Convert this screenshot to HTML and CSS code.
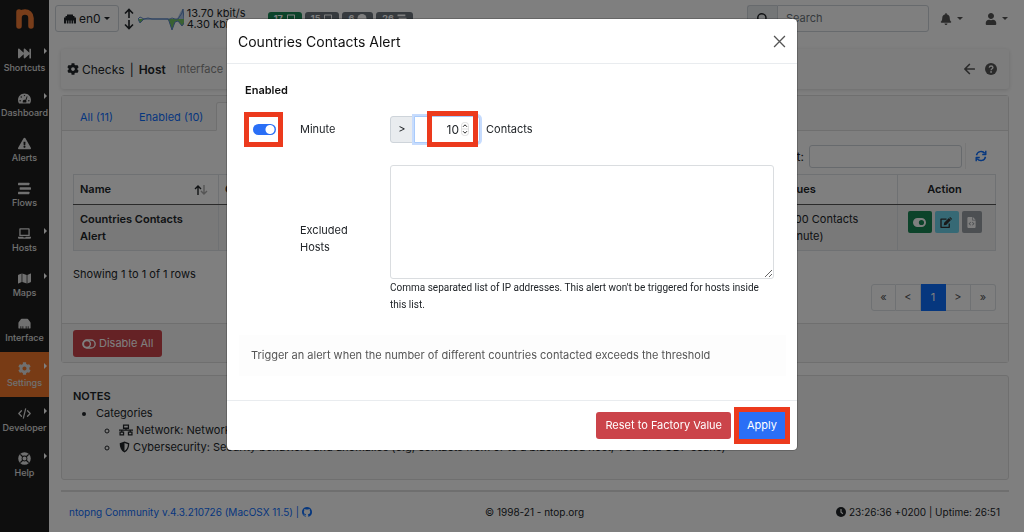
FILE: index.html
```html
<!DOCTYPE html>
<html lang="en">
<head>
<meta charset="utf-8">
<title>ntopng - Checks</title>
<link rel="stylesheet" href="styles.css">
</head>
<body>
<svg class="sprite" aria-hidden="true">
  <symbol id="i-forward" viewBox="0 0 512 512"><path d="M512 76v360c0 6.600-5.400 12-12 12h-40c-6.600 0-12-5.400-12-12V284.100L276.500 440.600c-20.600 17.200-52.500 2.800-52.500-24.600V284.100L52.500 440.600C31.900 457.800 0 443.400 0 416V96c0-27.400 31.900-41.700 52.500-24.600L224 226.800V96c0-27.400 31.900-41.700 52.500-24.600L448 226.800V76c0-6.600 5.400-12 12-12h40c6.600 0 12 5.400 12 12z"/></symbol>
  <symbol id="i-gauge" viewBox="0 0 576 512"><path fill-rule="evenodd" d="M288 32C129 32 0 161 0 320c0 52.800 14.300 102.300 39 144.800 5.600 9.600 16.300 15.200 27.400 15.200h443.200c11.100 0 21.800-5.600 27.400-15.200 24.700-42.500 39-92 39-144.800C576 161 447 32 288 32zm0 64c18 0 32 14 32 32s-14 32-32 32-32-14-32-32 14-32 32-32zM96 384c-18 0-32-14-32-32s14-32 32-32 32 14 32 32-14 32-32 32zm48-160c-18 0-32-14-32-32s14-32 32-32 32 14 32 32-14 32-32 32zm247-69 32 10-62 188c14 16 18 50 2 79H213c-16-60 15-112 75-116 13 0 26 4 37 10zm89 229c-18 0-32-14-32-32s14-32 32-32 32 14 32 32-14 32-32 32z"/></symbol>
  <symbol id="i-alert" viewBox="0 0 576 512"><path d="M569.517 440.013C587.975 472.007 564.806 512 527.940 512H48.054c-36.937 0-59.999-40.055-41.577-71.987L246.423 23.985c18.467-32.009 64.720-31.951 83.154 0l239.940 416.028zM288 354c-25.405 0-46 20.595-46 46s20.595 46 46 46 46-20.595 46-46-20.595-46-46-46zm-43.673-165.346l7.418 136c.347 6.364 5.609 11.346 11.982 11.346h48.546c6.373 0 11.635-4.982 11.982-11.346l7.418-136c.375-6.874-5.098-12.654-11.982-12.654h-63.383c-6.884 0-12.356 5.780-11.981 12.654z"/></symbol>
  <symbol id="i-stream" viewBox="0 0 512 512"><rect x="0" y="32" width="448" height="96" rx="16"/><rect x="64" y="208" width="448" height="96" rx="16"/><rect x="0" y="384" width="448" height="96" rx="16"/></symbol>
  <symbol id="i-laptop" viewBox="0 0 640 512"><path d="M624 416H381.540c-.740 19.810-14.710 32-32.740 32H288c-18.690 0-33.020-17.470-32.770-32H16c-8.800 0-16 7.200-16 16v16c0 35.200 28.800 64 64 64h512c35.200 0 64-28.800 64-64v-16c0-8.800-7.200-16-16-16zM576 48c0-26.400-21.600-48-48-48H112C85.600 0 64 21.600 64 48v336h512V48zm-64 272H128V64h384v256z"/></symbol>
  <symbol id="i-map" viewBox="0 0 576 512"><path d="M0 117.660v346.320c0 11.320 11.430 19.060 21.940 14.860L160 416V32L20.120 87.950A32 32 0 0 0 0 117.660zM192 416l192 64V96L192 32v384zM554.060 33.160L416 96v384l139.880-55.950A32 32 0 0 0 576 394.340V48.020c0-11.320-11.430-19.060-21.940-14.860z"/></symbol>
  <symbol id="i-eth" viewBox="0 0 512 512"><path d="M496 192h-48v-48c0-8.800-7.200-16-16-16h-48V80c0-8.800-7.200-16-16-16H144c-8.800 0-16 7.200-16 16v48H80c-8.800 0-16 7.200-16 16v48H16c-8.800 0-16 7.200-16 16v224c0 8.800 7.200 16 16 16h80V320h32v128h64V320h32v128h64V320h32v128h64V320h32v128h80c8.800 0 16-7.200 16-16V208c0-8.800-7.200-16-16-16z"/></symbol>
  <symbol id="i-port" viewBox="0 0 512 512"><path d="M150 70h212c20 0 40 20 60 50l65 85c8 10 9 20 9 30v195c0 10-8 18-18 18h-62v-80h-32v80h-48v-80h-32v80h-96v-80h-32v80h-48v-80H96v80H34c-10 0-18-8-18-18V235c0-10 1-20 9-30l65-85c20-30 40-50 60-50z"/></symbol>
  <symbol id="i-cog" viewBox="0 0 512 512"><path d="M487.400 315.700l-42.600-24.600c4.300-23.200 4.300-47 0-70.200l42.600-24.600c4.900-2.800 7.100-8.600 5.500-14-11.100-35.600-30-67.800-54.700-94.600-3.800-4.100-10-5.100-14.800-2.300L380.800 110c-17.900-15.400-38.500-27.300-60.800-35.100V25.800c0-5.600-3.900-10.500-9.400-11.700-36.700-8.200-74.300-7.800-109.200 0-5.500 1.200-9.400 6.100-9.400 11.700V75c-22.200 7.900-42.800 19.800-60.800 35.100L88.700 85.500c-4.900-2.800-11-1.900-14.800 2.300-24.700 26.700-43.600 58.900-54.700 94.600-1.700 5.400.6 11.200 5.500 14L67.300 221c-4.300 23.200-4.300 47 0 70.200l-42.600 24.600c-4.900 2.800-7.100 8.600-5.500 14 11.100 35.600 30 67.800 54.700 94.600 3.800 4.100 10 5.100 14.800 2.300l42.600-24.600c17.900 15.400 38.500 27.300 60.800 35.100v49.200c0 5.600 3.900 10.500 9.400 11.700 36.700 8.200 74.300 7.800 109.200 0 5.500-1.200 9.400-6.100 9.400-11.700v-49.200c22.200-7.900 42.800-19.800 60.800-35.100l42.600 24.600c4.900 2.800 11 1.900 14.800-2.300 24.700-26.700 43.600-58.900 54.700-94.600 1.500-5.500-.7-11.300-5.600-14.100zM256 336c-44.100 0-80-35.900-80-80s35.900-80 80-80 80 35.900 80 80-35.900 80-80 80z"/></symbol>
  <symbol id="i-code" viewBox="0 0 640 512"><path d="M170 120 40 256l130 136M470 120l130 136-130 136M375 30 265 482" fill="none" stroke="currentColor" stroke-width="62" stroke-linecap="round" stroke-linejoin="round"/></symbol>
  <symbol id="i-ring" viewBox="0 0 512 512"><path fill-rule="evenodd" d="M256 8a248 248 0 1 0 0 496 248 248 0 0 0 0-496zM108 74l86 86c38-24 86-24 124 0l86-86 34 34-86 86c24 38 24 86 0 124l86 86-34 34-86-86c-38 24-86 24-124 0l-86 86-34-34 86-86c-24-38-24-86 0-124l-86-86zM256 176a80 80 0 1 0 0 160 80 80 0 0 0 0-160z"/></symbol>
  <symbol id="i-bell" viewBox="0 0 448 512"><path d="M224 512c35.320 0 63.970-28.650 63.970-64H160.030c0 35.350 28.650 64 63.970 64zm215.390-149.710c-19.320-20.760-55.470-51.990-55.470-154.290 0-77.700-54.480-139.900-127.940-155.160V32c0-17.670-14.320-32-31.980-32s-31.980 14.330-31.980 32v20.840C118.560 68.100 64.080 130.300 64.080 208c0 102.300-36.150 133.530-55.470 154.290-6 6.450-8.660 14.160-8.610 21.710.11 16.400 12.980 32 32.100 32h383.800c19.120 0 32-15.600 32.100-32 .05-7.550-2.610-15.270-8.610-21.710z"/></symbol>
  <symbol id="i-user" viewBox="0 0 448 512"><path d="M224 256c70.700 0 128-57.300 128-128S294.700 0 224 0 96 57.300 96 128s57.300 128 128 128zm89.600 32h-16.700c-22.200 10.200-46.900 16-72.900 16s-50.600-5.800-72.900-16h-16.700C60.200 288 0 348.200 0 422.400V464c0 26.500 21.500 48 48 48h352c26.500 0 48-21.500 48-48v-41.600c0-74.200-60.200-134.400-134.400-134.400z"/></symbol>
  <symbol id="i-search" viewBox="0 0 16 16"><path d="M10.500 10.500 15 15M12 6.500a5.500 5.500 0 1 1-11 0 5.500 5.500 0 0 1 11 0z" fill="none" stroke="currentColor" stroke-width="2"/></symbol>
  <symbol id="i-back" viewBox="0 0 16 16"><path d="M8.500 2 2.500 8l6 6M3 8h12" fill="none" stroke="currentColor" stroke-width="2.200" stroke-linecap="round" stroke-linejoin="round"/></symbol>
  <symbol id="i-question" viewBox="0 0 16 16"><circle cx="8" cy="8" r="8"/><path d="M5.600 6.200C5.900 4.700 6.800 4 8.100 4c1.400 0 2.500.8 2.500 2.100C10.600 7.700 8.100 7.800 8.100 9.600" fill="none" stroke="#fafafa" stroke-width="1.700"/><circle cx="8.100" cy="11.900" r="1.200" fill="#fafafa"/></symbol>
  <symbol id="i-sync" viewBox="0 0 16 16"><path d="M2 7a6.200 6.200 0 0 1 11-2.600M14 9a6.200 6.200 0 0 1-11 2.600M14.400 1v5H9.600M1.600 15v-5h4.800" fill="none" stroke="currentColor" stroke-width="1.900" stroke-linejoin="round"/></symbol>
  <symbol id="i-toggle" viewBox="0 0 20 14"><rect x="1.200" y="1.200" width="17.600" height="11.600" rx="5.800" fill="none" stroke="currentColor" stroke-width="2"/><circle cx="7" cy="7" r="5" fill="none" stroke="currentColor" stroke-width="2"/></symbol>
  <symbol id="i-toggle-on" viewBox="0 0 20 14"><path fill-rule="evenodd" d="M7 0h6a7 7 0 0 1 0 14H7A7 7 0 0 1 7 0zm6 3a4 4 0 1 0 0 8 4 4 0 0 0 0-8z"/></symbol>
  <symbol id="i-edit" viewBox="0 0 18 16"><path d="M9 3H1v12h12V9.500" fill="none" stroke="currentColor" stroke-width="2" stroke-linejoin="round"/><path d="m5.500 8.500 7-7 3 3-7 7-3.500.5zM13.200.8l1-.8 3 3-1 1z"/></symbol>
  <symbol id="i-file" viewBox="0 0 12 16"><path fill-rule="evenodd" d="M1 0h6v5h5v10l-1 1H1l-1-1V1zm7 0 4 4H8zM4.500 7 1.700 9.800l2.800 2.700.8-.8-1.900-1.900 1.900-2zm3 0-.8.800 1.900 2-1.900 1.900.8.800 2.800-2.700z"/></symbol>
  <symbol id="i-network" viewBox="0 0 20 16"><path d="M6.500 1h7v4.500h-7zM1.500 11h5v4h-5zM13.500 11h5v4h-5zM10 6v2M0 8.300h20M4 8v3M16 8v3" fill="none" stroke="currentColor" stroke-width="1.800"/></symbol>
  <symbol id="i-shield" viewBox="0 0 16 16"><path fill-rule="evenodd" d="m8 0 7 2.700c0 6.300-2 11-7 13.300C3 13.700 1 9 1 2.700zm0 2.200v11.500c3.300-1.900 4.800-5 5-9.600z"/></symbol>
  <symbol id="i-clock" viewBox="0 0 16 16"><circle cx="8" cy="8" r="8"/><path d="M8 3v5.300l3 2.400" fill="none" stroke="#fff" stroke-width="1.800"/></symbol>
  <symbol id="i-github" viewBox="0 0 16 16"><path d="M8 0C3.580 0 0 3.580 0 8c0 3.540 2.290 6.530 5.470 7.590.4.070.55-.170.55-.380 0-.190-.010-.820-.010-1.490-2.010.370-2.530-.490-2.690-.940-.090-.230-.480-.940-.820-1.130-.280-.150-.680-.520-.010-.530.630-.010 1.080.580 1.230.820.720 1.210 1.870.870 2.330.660.070-.520.280-.870.510-1.070-1.780-.2-3.640-.890-3.640-3.950 0-.870.310-1.590.820-2.150-.080-.2-.360-1.020.080-2.120 0 0 .670-.210 2.200.820.640-.180 1.320-.270 2-.270s1.360.090 2 .270c1.530-1.040 2.200-.820 2.200-.820.440 1.100.160 1.920.080 2.120.510.560.820 1.270.820 2.150 0 3.070-1.870 3.750-3.650 3.950.290.250.540.730.540 1.480 0 1.070-.010 1.930-.010 2.200 0 .210.150.460.550.380A8.010 8.010 0 0 0 16 8c0-4.420-3.580-8-8-8z"/></symbol>
</svg>

<div class="app">
  <nav class="sidebar" aria-label="Main">
    <a class="brand" href="#" aria-label="ntop"><svg viewBox="0 0 18 20"><path d="M3 17V3M3 9C3 5 6 3 9 3s6 2 6 6v8" fill="none" stroke="#f17a34" stroke-width="5.500" stroke-linecap="round" stroke-linejoin="round"/></svg></a>
    <a class="item sub" href="#"><svg class="icon"><use href="#i-forward"/></svg>Shortcuts</a>
    <a class="item sub" href="#"><svg class="icon"><use href="#i-gauge"/></svg>Dashboard</a>
    <a class="item" href="#"><svg class="icon"><use href="#i-alert"/></svg>Alerts</a>
    <a class="item" href="#"><svg class="icon"><use href="#i-stream"/></svg>Flows</a>
    <a class="item sub" href="#"><svg class="icon"><use href="#i-laptop"/></svg>Hosts</a>
    <a class="item sub" href="#"><svg class="icon"><use href="#i-map"/></svg>Maps</a>
    <a class="item" href="#"><svg class="icon"><use href="#i-port"/></svg>Interface</a>
    <a class="item sub active" href="#"><svg class="icon"><use href="#i-cog"/></svg>Settings</a>
    <a class="item sub" href="#"><svg class="icon"><use href="#i-code"/></svg>Developer</a>
    <a class="item sub" href="#"><svg class="icon"><use href="#i-ring"/></svg>Help</a>
  </nav>

  <div class="main">
    <header class="topbar">
      <button class="iface" type="button"><svg class="icon"><use href="#i-eth"/></svg>en0<span class="caret"></span></button>
      <svg class="updown" viewBox="0 0 10 22"><path d="M5 10V2M1 5.500l4-4 4 4M5 12v8M1 16.500l4 4 4-4" fill="none" stroke="#212529" stroke-width="1.600"/></svg>
      <svg class="spark" viewBox="0 0 46 24"><path d="M30 12h9l4-8 2-2 1 10z" fill="#aec7e8"/><path d="M0 12l2 4 4-4zM30 12h16v5l-2 2-4-5-3 1-3 8-3-9z" fill="#74c365"/><path d="M0 12 2 10l4 2 4-1 4 1h18l2-1 3 1h3l4-6 1-4 1 10M0 12l2 4 4-4h24l1 2 3 9 3-8 3-1 4 5 2-3" fill="none" stroke="#5d86c5"/></svg>
      <div class="rates"><span>13.70 kbit/s</span><span>4.30 kbit/s</span></div>
      <div class="badges">
        <a class="badge green" href="#">17 <svg class="icon"><use href="#i-laptop"/></svg></a>
        <a class="badge" href="#">15 <svg class="icon"><use href="#i-laptop"/></svg></a>
        <a class="badge" href="#">6 <svg class="icon"><use href="#i-clock"/></svg></a>
        <a class="badge" href="#">26 <svg class="icon"><use href="#i-stream"/></svg></a>
      </div>
      <div class="search">
        <label for="q" aria-label="Search"><svg class="icon"><use href="#i-search"/></svg></label>
        <input id="q" type="text" placeholder="Search">
      </div>
      <button class="tool" type="button" aria-label="Notifications"><svg class="icon"><use href="#i-bell"/></svg><span class="caret"></span></button>
      <button class="tool" type="button" aria-label="Account"><svg class="icon"><use href="#i-user"/></svg><span class="caret"></span></button>
    </header>

    <div class="content">
      <nav class="crumbs" aria-label="Checks">
        <svg class="icon"><use href="#i-cog"/></svg><span class="crumb">Checks</span><span class="bar">|</span>
        <a class="here" href="#">Host</a><a class="other" href="#">Interface</a>
        <a class="right" href="#" aria-label="Back"><svg class="icon"><use href="#i-back"/></svg></a>
        <a href="#" aria-label="Help"><svg class="icon"><use href="#i-question"/></svg></a>
      </nav>

      <section class="card">
        <div class="tabs">
          <a href="#">All (11)</a><a href="#">Enabled (10)</a><a class="on" href="#">Disabled (1)</a>
        </div>
        <div class="card-body">
          <div class="filter">
            <label for="script">Search Script:</label><input id="script" type="text">
            <button type="button" aria-label="Refresh"><svg class="icon"><use href="#i-sync"/></svg></button>
          </div>
          <table>
            <colgroup><col class="c-name"><col class="c-cat"><col><col class="c-val"><col class="c-act"></colgroup>
            <thead><tr>
              <th><span class="sort">Name<svg viewBox="0 0 14 10"><path d="M4 10V1M1 4l3-3 3 3" fill="none" stroke="#212529" stroke-width="1.400"/><path d="M10 0v9M7 6l3 3 3-3" fill="none" stroke="#aaa" stroke-width="1.400"/></svg></span></th>
              <th>Category</th><th>Description</th><th>Values</th><th class="mid">Action</th>
            </tr></thead>
            <tbody><tr>
              <td class="name">Countries Contacts Alert</td><td></td><td></td>
              <td>&gt; 100 Contacts (Minute)</td>
              <td><div class="acts">
                <button class="ok" type="button" aria-label="Enable"><svg class="icon"><use href="#i-toggle-on"/></svg></button>
                <button class="info" type="button" aria-label="Edit"><svg class="icon"><use href="#i-edit"/></svg></button>
                <button class="gray" type="button" aria-label="Source"><svg class="icon"><use href="#i-file"/></svg></button>
              </div></td>
            </tr></tbody>
          </table>
          <p class="count">Showing 1 to 1 of 1 rows</p>
          <div class="pages"><a href="#">«</a><a href="#">&lt;</a><a class="on" href="#">1</a><a href="#">&gt;</a><a href="#">»</a></div>
        </div>
        <div class="card-foot"><button class="btn danger" type="button"><svg class="icon"><use href="#i-toggle"/></svg>Disable All</button></div>
      </section>

      <section class="notes">
        <b>NOTES</b>
        <ul><li>Categories
          <ul>
            <li><svg class="icon"><use href="#i-network"/></svg> Network: Network related checks</li>
            <li><svg class="icon shield"><use href="#i-shield"/></svg> Cybersecurity: Security behaviors and anomalies (e.g, contacts from or to a blacklisted host, TCP and UDP scans)</li>
          </ul></li></ul>
      </section>

      <footer class="foot">
        <a href="#">ntopng Community v.4.3.210726 (MacOSX 11.5) | <svg class="icon"><use href="#i-github"/></svg></a>
        <span>© 1998-21 - ntop.org</span>
        <span class="time"><svg class="icon"><use href="#i-clock"/></svg> 23:26:36 +0200 | Uptime: 26:51</span>
      </footer>
    </div>
  </div>
</div>

<div class="backdrop">
  <div class="modal" role="dialog" aria-modal="true" aria-labelledby="title">
    <div class="modal-head">
      <h1 id="title">Countries Contacts Alert</h1>
      <button type="button" aria-label="Close"><svg viewBox="0 0 12 12"><path d="m1 1 10 10M11 1 1 11" stroke="#555" stroke-width="1.200"/></svg></button>
    </div>
    <form class="modal-body">
      <b class="enabled">Enabled</b>
      <div class="mark mark-switch"><input class="switch" id="minute" type="checkbox" checked></div>
      <label for="minute">Minute</label>
      <div class="threshold">
        <span class="op">&gt;</span>
        <div class="mark mark-number"><input id="limit" class="number" type="number" value="10">
          <svg class="spin" viewBox="0 0 8 14"><rect x=".500" y=".500" width="7" height="13" rx="3" fill="#fff" stroke="#ddd"/><path d="M0 7h8" stroke="#ddd"/><path d="m2 4.800 2-2 2 2M2 9.200l2 2 2-2" fill="none" stroke="#222"/></svg>
        </div>
        <label class="unit" for="limit">Contacts</label>
      </div>
      <label class="hosts-label" for="hosts">Excluded Hosts</label>
      <div class="hosts">
        <textarea id="hosts"></textarea>
        <small>Comma separated list of IP addresses. This alert won't be triggered for hosts inside this list.</small>
      </div>
      <p class="about">Trigger an alert when the number of different countries contacted exceeds the threshold</p>
    </form>
    <div class="modal-foot">
      <button class="btn danger" type="button">Reset to Factory Value</button>
      <div class="mark mark-apply"><button class="btn primary" type="button">Apply</button></div>
    </div>
  </div>
</div>
</body>
</html>
```
FILE: styles.css
```css
* { box-sizing: border-box; }
body {
  margin: 0;
  background: #fff;
  color: #212529;
  font: 11px/17px Inter, "Liberation Sans", sans-serif;
}
a { color: #0d6efd; text-decoration: none; }
button, input, textarea { font: inherit; color: inherit; }
button { cursor: pointer; }
p, h1 { margin: 0; font-weight: 400; }
.sprite { position: absolute; width: 0; height: 0; }
.icon { width: 12px; height: 12px; fill: currentColor; flex: none; }
.caret { border: 3px solid transparent; border-top-color: currentColor; border-bottom: 0; }

.app { display: flex; min-height: 100vh; }
.sidebar { width: 49px; flex: none; background: #1c1c1c; display: flex; flex-direction: column; }
.brand { height: 37px; display: flex; justify-content: center; padding-top: 9px; }
.brand svg { width: 18px; height: 20px; }
.item {
  position: relative;
  height: 45px;
  display: flex;
  flex-direction: column;
  align-items: center;
  padding-top: 10px;
  color: #e0e0e0;
  font-size: 9px;
  font-weight: 500;
  line-height: 15px;
}
.item .icon { width: 13px; height: 13px; }
.sub::after {
  content: "";
  position: absolute;
  right: 2px;
  top: 11px;
  border: 3px solid transparent;
  border-left-color: #fff;
  border-right: 0;
}
.active { background: #f0772b; }

.main { flex: 1; min-width: 0; }
.topbar { display: flex; align-items: center; height: 37px; padding: 0 17px 0 6px; }
.iface {
  display: flex; align-items: center; gap: 3px;
  height: 27px; padding: 0 8px;
  background: none; border: 1px solid #ced4da; border-radius: 3px;
  font-size: 12px;
}
.updown { width: 10px; height: 22px; margin-left: 5px; }
.spark { width: 46px; height: 24px; margin: 0 3px 0 4px; }
.rates { display: flex; flex-direction: column; width: 64px; font-size: 11px; line-height: 11px; white-space: nowrap; }
.badges { display: flex; gap: 3px; margin-left: 17px; }
.badge {
  display: flex; align-items: center; gap: 3px;
  height: 14px; padding: 0 6px;
  background: #6c757d; color: #fff; border-radius: 3px;
  font-size: 9px; font-weight: 700;
}
.badge .icon { width: 10px; height: 9px; }
.green { background: #198754; }
.search { display: flex; width: 182px; height: 27px; margin: 0 11px 0 auto; }
.search label {
  display: flex; align-items: center; justify-content: center;
  width: 30px; background: #e9ecef;
  border: 1px solid #ced4da; border-right: 0; border-radius: 3px 0 0 3px;
}
.search input {
  flex: 1; min-width: 0; padding: 0 8px; background: #fff;
  border: 1px solid #ced4da; border-radius: 0 3px 3px 0;
}
.search input::placeholder { color: #6c757d; }
.tool {
  display: flex; align-items: center; gap: 6px;
  width: 45px; padding: 0; border: 0; background: none; color: #555;
}
.tool:last-child { width: 22px; }
.tool .caret { margin-left: -1px; }

.content { padding: 12px 15px 0 12px; }
.crumbs {
  display: flex; align-items: center;
  height: 40px; padding: 0 12px 0 6px;
  background: #fafafa; border-radius: 3px; box-shadow: 0 1px 4px rgba(0, 0, 0, .15);
  font-size: 12px;
}
.crumb { margin-left: 3px; }
.bar { margin: 0 5px; }
.here { color: #212529; font-weight: 600; }
.other { color: #888; margin-left: 11px; font-size: 11px; }
.right { margin: 0 10px 0 auto; }
.crumbs a { display: flex; }
.crumbs a .icon { color: #555; }

.card { margin-top: 6px; border: 1px solid #dfdfdf; border-radius: 3px; }
.tabs { display: flex; height: 35px; padding: 6px 6px 0 5px; background: #f7f7f7; border-bottom: 1px solid #dfdfdf; }
.tabs a { padding: 6px 12px 0; height: 29px; border: 1px solid transparent; }
.tabs .on { background: #fff; color: #495057; border-color: #dfdfdf #dfdfdf #fff; border-radius: 3px 3px 0 0; }
.card-body { padding: 12px 12px 12px 11px; }
.filter { display: flex; align-items: center; justify-content: flex-end; height: 26px; margin-bottom: 5px; }
.filter label { font-size: 12px; }
.filter input { width: 153px; height: 23px; margin: 0 3px 0 5px; border: 1px solid #ced4da; border-radius: 3px; background: #fff; }
.filter button { display: flex; padding: 7px 9px; border: 0; border-left: 1px solid #eee; background: none; color: #0d6efd; }
table { width: 100%; table-layout: fixed; border-collapse: collapse; }
.c-name { width: 145px; }
.c-cat { width: 100px; }
.c-val { width: 124px; }
.c-act { width: 98px; }
th, td { border: 1px solid #dee2e6; padding: 6px 10px 5px 6px; text-align: left; vertical-align: top; }
th { padding-bottom: 6px; font-weight: 600; border-bottom-color: #555; }
td { background: #f2f2f2; }
.name, b { font-weight: 600; }
.name { padding-right: 16px; }
.mid { text-align: center; }
.sort { display: flex; align-items: center; justify-content: space-between; }
.sort svg { width: 14px; height: 10px; }
.acts { display: flex; justify-content: center; gap: 3px; }
.acts button { display: flex; align-items: center; justify-content: center; width: 24px; height: 22px; padding: 0; border: 0; border-radius: 2px; }
.acts .ok { background: #198754; color: #fff; }
.acts .info { background: #6cd3ea; color: #333; }
.acts .gray { width: 20px; background: #989ea4; color: #fff; }
.acts .icon { width: 13px; height: 11px; }
.count { margin-top: 15px; }
.pages { display: flex; justify-content: flex-end; margin-top: 1px; }
.pages a { width: 25px; height: 27px; line-height: 25px; text-align: center; color: #555; border: 1px solid #dee2e6; border-left-width: 0; }
.pages a:first-child { border-left-width: 1px; border-radius: 3px 0 0 3px; }
.pages a:last-child { border-radius: 0 3px 3px 0; }
.pages .on { background: #0d6efd; border-color: #0d6efd; color: #fff; }
.card-foot { padding: 6px 11px 5px; background: #f7f7f7; border-top: 1px solid #dfdfdf; }
.btn {
  display: flex; align-items: center; justify-content: center; gap: 3px;
  height: 27px; padding: 0 9px; border: 0; border-radius: 3px;
  color: #fff; white-space: nowrap;
}
.btn .icon { width: 14px; }
.danger { background: #cb444a; }
.primary { background: #2a6ff6; }

.notes { margin-top: 12px; padding: 12px 11px; min-height: 105px; background: #f7f7f7; border: 1px solid #dfdfdf; border-radius: 3px; white-space: nowrap; overflow: hidden; }
.notes ul { margin: 0; padding-left: 23px; }
.notes .icon { width: 14px; vertical-align: -2px; }
.notes .shield { width: 11px; }
.foot { display: grid; grid-template-columns: 1fr auto 1fr; margin-top: 10px; padding: 12px 9px 11px 8px; border-top: 2px solid #dfdfdf; font-size: 10px; }
.time { text-align: right; }
.foot .icon { width: 10px; height: 10px; vertical-align: -1px; }

.backdrop { position: fixed; inset: 0; background: rgba(0, 0, 0, .5); overflow: auto; }
.modal { width: 570px; max-width: 100%; margin: 19px auto; background: #fff; border-radius: 4px; box-shadow: 0 0 0 1px rgba(0, 0, 0, .2); }
.modal-head { display: flex; justify-content: space-between; align-items: center; height: 45px; padding: 0 11px; border-bottom: 1px solid #e9ecef; }
.modal-head h1 { font-size: 14px; color: #111; }
.modal-head button { display: flex; padding: 0; border: 0; background: none; }
.modal-head svg { width: 13px; height: 13px; }
.modal-body { display: grid; grid-template-columns: 55px 90px 1fr; align-items: center; padding: 18px 23px 24px 18px; }
.enabled { grid-column: 1 / 4; color: #111; }
.mark { position: relative; display: flex; }
.mark::after { content: ""; position: absolute; border: 5px solid #ec3a1d; pointer-events: none; }
.mark-switch { width: 38px; height: 35px; align-items: center; justify-content: center; }
.mark-switch::after { inset: 0 0 0 -1px; }
.switch { appearance: none; width: 23px; height: 11px; margin: 0; border-radius: 6px; background: radial-gradient(circle at 17px 50%, #fff 4px, #2a6ff6 5px); }
.threshold { display: flex; align-items: center; height: 60px; }
.op { width: 24px; height: 27px; line-height: 25px; text-align: center; background: #e9ecef; border: 1px solid #ced4da; border-radius: 3px 0 0 3px; }
.number { appearance: textfield; width: 66px; height: 27px; padding: 0 20px 0 6px; text-align: right; font-size: 12px; background: #fff; border: 1px solid #a9cbfb; border-radius: 0 3px 3px 0; box-shadow: 0 0 0 2px #c7dcfd; }
.number::-webkit-inner-spin-button { appearance: none; margin: 0; }
.mark-number::after { inset: -5px 2px -4px 13px; }
.spin { position: absolute; right: 11px; top: 6px; width: 8px; height: 14px; }
.unit { margin-left: 6px; }
.hosts-label { grid-column: 2; margin-top: 6px; padding-right: 30px; }
.hosts { margin-top: 6px; }
textarea { display: block; width: 100%; height: 114px; border: 1px solid #dadde0; border-radius: 3px; background: #fff; }
small { display: block; font: 10px/17px Roboto, sans-serif; }
.about { grid-column: 1 / 4; margin: 22px -12px 0 -6px; padding: 12px; background: #fdfdfd; color: #555; }
.modal-foot { display: flex; justify-content: flex-end; align-items: center; gap: 8px; height: 50px; padding: 0 12px; border-top: 1px solid #e9ecef; }
.mark-apply::after { inset: -5px; }
.mark-apply .btn { padding: 0 8px; border-radius: 0; }
```
